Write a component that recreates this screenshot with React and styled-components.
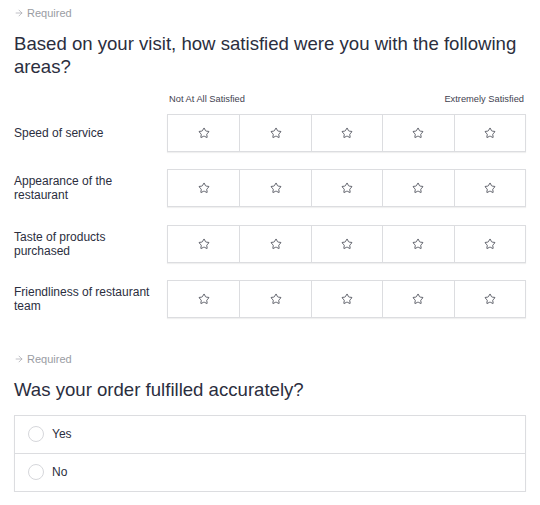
import React from "react";
import styled, { createGlobalStyle } from "styled-components";
import { Star, ArrowRight } from "lucide-react";

const GlobalStyle = createGlobalStyle`
    body {
        margin: 0;
        background: #ffffff;
        font-family: "Liberation Sans", Arial, sans-serif;
        color: #2b2e3e;
    }
`;

const Page = styled.div`
    padding: 6px 14px 0 14px;
    width: 512px;
`;

const Section = styled.section`
    margin-bottom: ${(props) => props.gap || 0}px;
`;

const Required = styled.div`
    display: flex;
    align-items: center;
    gap: 3px;
    font-size: 11px;
    color: #9a9ca3;
    height: 14px;
    margin-bottom: 12px;
`;

const Question = styled.h2`
    font-size: 18.6px;
    font-weight: normal;
    line-height: 23px;
    margin: 0 0 ${(props) => props.after || 0}px 0;
    color: #2b2e3e;
`;

const ScaleRow = styled.div`
    display: flex;
    justify-content: space-between;
    margin-left: 153px;
    padding: 0 2px;
    font-size: 9.3px;
    color: #3f4250;
    height: 12px;
    margin-bottom: 8px;
`;

const Matrix = styled.div`
    display: flex;
    flex-direction: column;
    gap: 17.3px;
`;

const MatrixRow = styled.div`
    display: flex;
    align-items: center;
`;

const RowLabel = styled.div`
    width: 153px;
    padding-right: 16px;
    box-sizing: border-box;
    font-size: 12px;
    line-height: 14px;
    color: #2b2e3e;
`;

const Cells = styled.div`
    flex: 1;
    display: grid;
    grid-template-columns: repeat(5, 1fr);
    border: 1px solid #dcdde0;
    box-shadow: 0 1px 1px rgba(0, 0, 0, 0.06);
    background: #fff;
`;

const Cell = styled.button`
    height: 36px;
    display: flex;
    align-items: center;
    justify-content: center;
    background: #fff;
    border: none;
    border-left: ${(props) => (props.$first ? "none" : "1px solid #dcdde0")};
    padding: 0;
    color: #2f323e;
    cursor: pointer;
`;

const Options = styled.div`
    border: 1px solid #dcdde0;
    box-shadow: 0 1px 1px rgba(0, 0, 0, 0.06);
`;

const Option = styled.label`
    display: flex;
    align-items: center;
    gap: 8px;
    height: 37px;
    padding-left: 13px;
    font-size: 12px;
    color: #2b2e3e;
    border-top: ${(props) => (props.$first ? "none" : "1px solid #dcdde0")};
`;

const Radio = styled.span`
    width: 16px;
    height: 16px;
    border-radius: 50%;
    border: 1px solid #d6d7db;
    box-sizing: border-box;
`;

const areas = [
    "Speed of service",
    "Appearance of the restaurant",
    "Taste of products purchased",
    "Friendliness of restaurant team",
];

const RequiredTag = () => (
    <Required>
        <ArrowRight size={10} strokeWidth={1.5} />
        Required
    </Required>
);

export default function App() {
    return (
        <>
            <GlobalStyle />
            <Page>
                <Section gap={34}>
                    <RequiredTag />
                    <Question after={16}>
                        Based on your visit, how satisfied were you with the following areas?
                    </Question>
                    <ScaleRow>
                        <span>Not At All Satisfied</span>
                        <span>Extremely Satisfied</span>
                    </ScaleRow>
                    <Matrix>
                        {areas.map((area) => (
                            <MatrixRow key={area}>
                                <RowLabel>{area}</RowLabel>
                                <Cells>
                                    {[1, 2, 3, 4, 5].map((n) => (
                                        <Cell key={n} $first={n === 1}>
                                            <Star size={12} strokeWidth={1.5} />
                                        </Cell>
                                    ))}
                                </Cells>
                            </MatrixRow>
                        ))}
                    </Matrix>
                </Section>
                <Section>
                    <RequiredTag />
                    <Question after={14}>Was your order fulfilled accurately?</Question>
                    <Options>
                        <Option $first>
                            <Radio />
                            Yes
                        </Option>
                        <Option>
                            <Radio />
                            No
                        </Option>
                    </Options>
                </Section>
            </Page>
        </>
    );
}
